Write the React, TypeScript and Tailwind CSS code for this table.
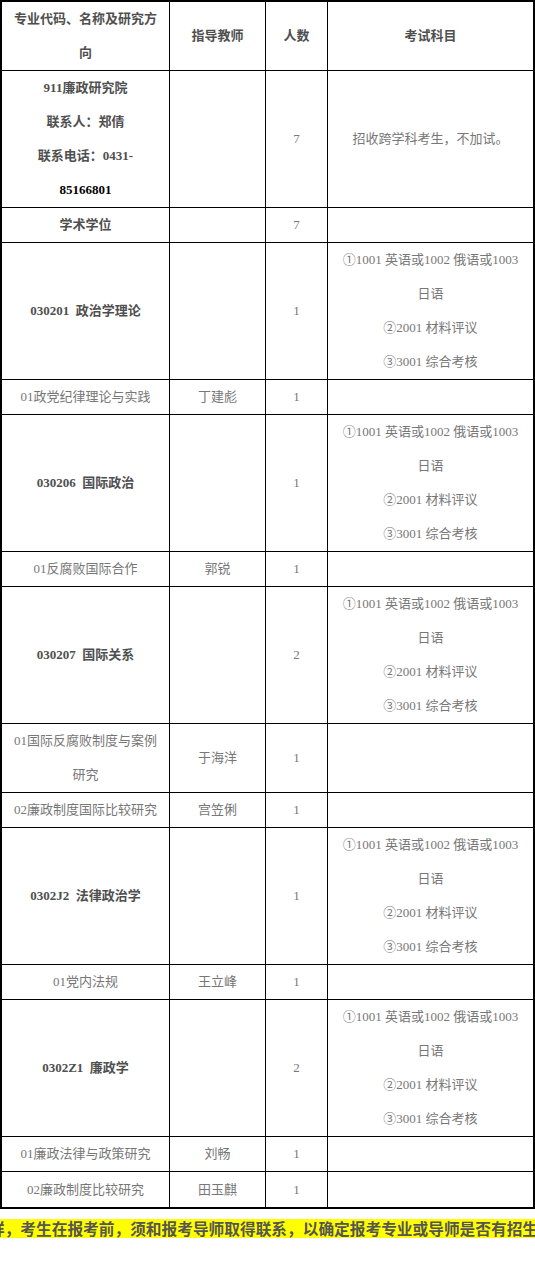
import React from 'react';

type Row = {
  lines: number;
  major: string[];
  bold?: boolean;
  teacher?: string;
  count?: string;
  exam?: string[];
};

const EXAM = ['①1001 英语或1002 俄语或1003', '日语', '②2001 材料评议', '③3001 综合考核'];

const rows: Row[] = [
  { lines: 4, major: ['911廉政研究院', '联系人：郑倩', '联系电话：0431-', '85166801'], bold: true, count: '7', exam: ['招收跨学科考生，不加试。'] },
  { lines: 1, major: ['学术学位'], bold: true, count: '7' },
  { lines: 4, major: ['030201  政治学理论'], bold: true, count: '1', exam: EXAM },
  { lines: 1, major: ['01政党纪律理论与实践'], teacher: '丁建彪', count: '1' },
  { lines: 4, major: ['030206  国际政治'], bold: true, count: '1', exam: EXAM },
  { lines: 1, major: ['01反腐败国际合作'], teacher: '郭锐', count: '1' },
  { lines: 4, major: ['030207  国际关系'], bold: true, count: '2', exam: EXAM },
  { lines: 2, major: ['01国际反腐败制度与案例', '研究'], teacher: '于海洋', count: '1' },
  { lines: 1, major: ['02廉政制度国际比较研究'], teacher: '宫笠俐', count: '1' },
  { lines: 4, major: ['0302J2  法律政治学'], bold: true, count: '1', exam: EXAM },
  { lines: 1, major: ['01党内法规'], teacher: '王立峰', count: '1' },
  { lines: 4, major: ['0302Z1  廉政学'], bold: true, count: '2', exam: EXAM },
  { lines: 1, major: ['01廉政法律与政策研究'], teacher: '刘畅', count: '1' },
  { lines: 1, major: ['02廉政制度比较研究'], teacher: '田玉麒', count: '1' },
];

const heights: Record<number, string> = {
  1: 'h-[35px]',
  2: 'h-[69px]',
  4: 'h-[137px]',
};

const Lines = ({ items, className }: { items: string[]; className?: string }) => (
  <div className={className}>
    {items.map((t, i) => (
      <div key={i} className="whitespace-pre">{t}</div>
    ))}
  </div>
);

export default function App() {
  return (
    <div className="w-[535px] bg-white" style={{ fontFamily: '"Liberation Serif", "Noto Sans CJK SC", serif' }}>
      <div className="border-2 border-black text-[13px] leading-[34px] text-center">
        {/* Header */}
        <div className="flex h-[69px] border-b border-black font-bold text-[#4f4f4f]">
          <div className="w-[168px] shrink-0 border-r border-black flex items-center justify-center px-[7px]">
            <Lines items={['专业代码、名称及研究方', '向']} />
          </div>
          <div className="w-[96px] shrink-0 border-r border-black flex items-center justify-center">指导教师</div>
          <div className="w-[62px] shrink-0 border-r border-black flex items-center justify-center">人数</div>
          <div className="flex-1 flex items-center justify-center">考试科目</div>
        </div>

        {rows.map((r, idx) => (
          <div
            key={idx}
            className={`flex ${heights[r.lines]} ${idx < rows.length - 1 ? 'border-b border-black' : 'h-[34px]'}`}
          >
            <div className="w-[168px] shrink-0 border-r border-black flex items-center justify-center px-[7px]">
              {r.bold ? (
                <div className="font-bold text-[#4f4f4f]">
                  {r.major.map((t, i) => (
                    <div key={i} className={`whitespace-pre ${t === '85166801' ? 'text-black' : ''}`}>{t}</div>
                  ))}
                </div>
              ) : (
                <Lines items={r.major} className="text-[#777777]" />
              )}
            </div>
            <div className="w-[96px] shrink-0 border-r border-black flex items-center justify-center text-[#777777]">
              {r.teacher}
            </div>
            <div className="w-[62px] shrink-0 border-r border-black flex items-center justify-center text-[#777777]">
              {r.count}
            </div>
            <div className="flex-1 flex items-center justify-center text-[#777777]">
              {r.exam && <Lines items={r.exam} />}
            </div>
          </div>
        ))}
      </div>

      {/* Note banner */}
      <div className="mt-[9px] h-[20px] overflow-hidden whitespace-nowrap">
        <span
          className="inline-block ml-[-11px] bg-[#ffff00] text-[15.7px] leading-[20px] font-bold text-[#555555]"
          style={{ fontFamily: '"Noto Sans CJK SC", sans-serif' }}
        >
          详，考生在报考前，须和报考导师取得联系，以确定报考专业或导师是否有招生名额。
        </span>
      </div>
      <div className="h-[65px]" />
    </div>
  );
}
